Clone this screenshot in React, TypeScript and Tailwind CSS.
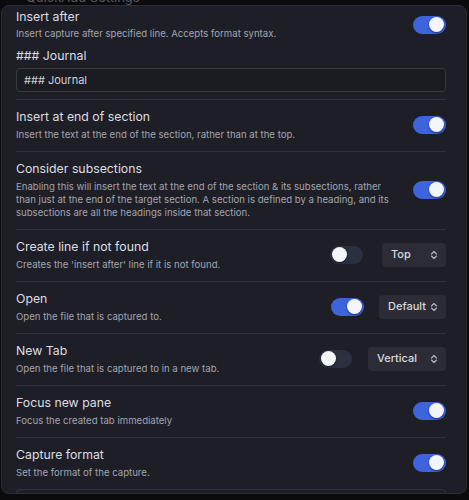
import React from "react";

type Row = {
  title: string;
  desc: string;
  on: boolean;
  select?: string;
  selectW?: string;
  gap?: string;
};

const rows: Row[] = [
  {
    title: "Insert at end of section",
    desc: "Insert the text at the end of the section, rather than at the top.",
    on: true,
  },
  {
    title: "Consider subsections",
    desc: "Enabling this will insert the text at the end of the section & its subsections, rather than just at the end of the target section. A section is defined by a heading, and its subsections are all the headings inside that section.",
    on: true,
  },
  {
    title: "Create line if not found",
    desc: "Creates the 'insert after' line if it is not found.",
    on: false,
    select: "Top",
    selectW: "w-[64px]",
    gap: "gap-[19px]",
  },
  {
    title: "Open",
    desc: "Open the file that is captured to.",
    on: true,
    select: "Default",
    selectW: "w-[67px]",
    gap: "gap-[15px]",
  },
  {
    title: "New Tab",
    desc: "Open the file that is captured to in a new tab.",
    on: false,
    select: "Vertical",
    selectW: "w-[78px]",
    gap: "gap-[16px]",
  },
  {
    title: "Focus new pane",
    desc: "Focus the created tab immediately",
    on: true,
  },
  {
    title: "Capture format",
    desc: "Set the format of the capture.",
    on: true,
  },
];

const Toggle = ({ on }: { on: boolean }) => (
  <div
    className={`flex h-[18px] w-[33px] shrink-0 items-center rounded-full px-[2px] ${
      on ? "justify-end bg-[#3d64dc]" : "justify-start bg-[#2b3040]"
    }`}
  >
    <div className="h-[15px] w-[15px] rounded-full bg-[#f4f5fa] shadow-[0_1px_2px_rgba(0,0,0,0.5)]" />
  </div>
);

const Chevrons = () => (
  <svg width="8" height="10" viewBox="0 0 8 10" fill="none" className="shrink-0">
    <path d="M1.5 4 L4 1.5 L6.5 4" stroke="#b8bac4" strokeWidth="1.1" strokeLinecap="round" strokeLinejoin="round" />
    <path d="M1.5 6 L4 8.5 L6.5 6" stroke="#b8bac4" strokeWidth="1.1" strokeLinecap="round" strokeLinejoin="round" />
  </svg>
);

const Select = ({ value, w }: { value: string; w?: string }) => (
  <div
    className={`flex h-[24px] items-center justify-between rounded-[4px] bg-[#2b2c35] pl-[9px] pr-[8px] text-[11px] font-medium text-[#d8d9df] ${w}`}
  >
    <span>{value}</span>
    <Chevrons />
  </div>
);

const SettingRow = ({ row }: { row: Row }) => (
  <div className="flex items-center justify-between border-t border-[#30323b] pb-[10px] pt-[8px]">
    <div className="w-[386px]">
      <div className="text-[12.3px] leading-[17px] text-[#dcdde3]">{row.title}</div>
      <div className="mt-[3px] text-[9.6px] leading-[13px] text-[#a2a5b0]">{row.desc}</div>
    </div>
    <div className={`flex items-center ${row.gap ?? ""}`}>
      <Toggle on={row.on} />
      {row.select && <Select value={row.select} w={row.selectW} />}
    </div>
  </div>
);

export default function App() {
  return (
    <div
      className="min-h-screen w-[469px] overflow-hidden bg-[#0b0b0d]"
      style={{ fontFamily: "Inter, 'Noto Sans', sans-serif" }}
    >
      <div className="h-[5px] overflow-hidden pl-[26px]">
        <div className="-mt-[10px] text-[13px] leading-[15px] text-[#55575f]">QuickAdd Settings</div>
      </div>
      <div className="ml-[1px] h-[489px] w-[466px] overflow-hidden rounded-[8px] border border-[#2c2e36] bg-[#1e1f26] pl-[14px] pr-[20px]">
        <div className="flex items-center justify-between pt-[2px]">
          <div>
            <div className="text-[12.3px] leading-[17px] text-[#dcdde3]">Insert after</div>
            <div className="mt-[2px] text-[9.6px] leading-[14px] text-[#a2a5b0]">
              Insert capture after specified line. Accepts format syntax.
            </div>
          </div>
          <Toggle on />
        </div>
        <div className="mt-[6px] text-[12.3px] leading-[17px] text-[#dcdde3]">### Journal</div>
        <div className="mt-[4px] flex h-[24px] items-center rounded-[4px] border border-[#363842] bg-[#1b1c22] px-[7px] text-[11px] text-[#d0d2d8]">
          ### Journal
        </div>
        <div className="h-[7px]" />
        {rows.map((row, i) => (
          <SettingRow key={i} row={row} />
        ))}
        <div className="h-[10px] rounded-t-[4px] border border-[#30323b]" />
      </div>
    </div>
  );
}
